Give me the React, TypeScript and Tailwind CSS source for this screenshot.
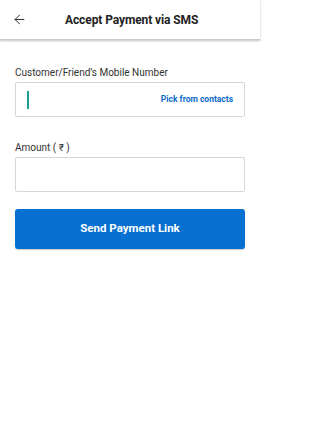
import { ArrowLeft } from 'lucide-react';

export default function App() {
  return (
    <div className="h-[442px] w-[260px] bg-white font-['Roboto',sans-serif] text-[#222]">
      {/* Barra superior */}
      <div className="flex h-[40px] items-center border-b border-[#c8c8c8] shadow-[0_1px_2px_rgba(0,0,0,0.25)]">
        <button className="ml-[11px] flex h-[16px] w-[16px] items-center justify-center text-[#222]">
          <ArrowLeft className="h-[15px] w-[15px]" strokeWidth={1.5} />
        </button>
        <h1 className="ml-[38px] text-[12px] font-bold tracking-[-0.1px]">Accept Payment via SMS</h1>
      </div>

      <div className="px-[15px] pt-[26px]">
        <label className="block text-[10px] leading-[14px] text-[#333]">
          Customer/Friend’s Mobile Number
        </label>
        <div className="mt-[2px] flex h-[35px] items-center rounded-[2px] border border-[#d6d6d6] pl-[11px] pr-[11px]">
          <span className="h-[18px] w-[2px] bg-[#1a9c8c]" />
          <span className="ml-auto text-[8.5px] font-bold text-[#0a6acb]">Pick from contacts</span>
        </div>

        <label className="mt-[24px] block text-[10px] leading-[14px] text-[#333]">Amount ( ₹ )</label>
        <div className="mt-[2px] h-[35px] rounded-[2px] border border-[#d6d6d6]" />

        <button className="mt-[17px] flex h-[40px] w-full items-center justify-center rounded-[3px] bg-[#0770d0] text-[11.5px] font-bold text-white shadow-[0_1px_1px_rgba(0,0,0,0.2)]">
          Send Payment Link
        </button>
      </div>
    </div>
  );
}
